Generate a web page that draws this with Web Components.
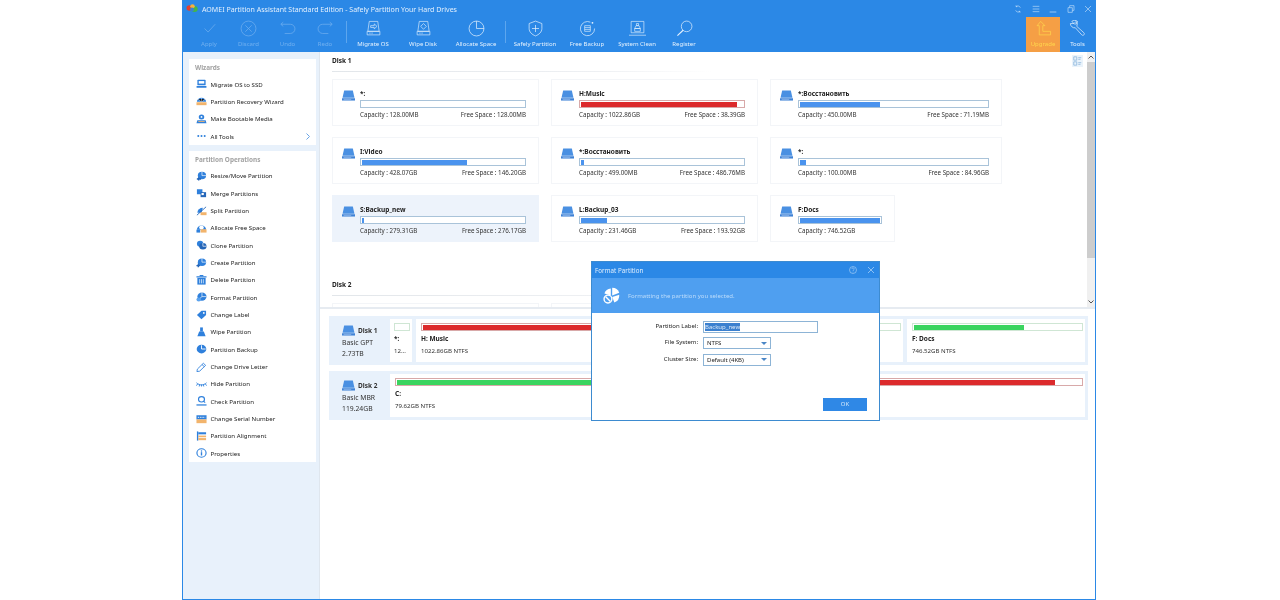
<!DOCTYPE html>
<html lang="en"><head><meta charset="utf-8"><title>AOMEI Partition Assistant</title>
<style>
html,body{margin:0;padding:0;background:#fff;height:600px;overflow:hidden}
body{font-family:"Noto Sans","DejaVu Sans",sans-serif;font-size:6.3px;color:#333;padding-left:182px}
</style></head><body>
<app-window></app-window>
<script>
const B='#2f80dc',O='#f2b46c';
const ICONS={
check:'<path d="M5 12l5 5 10-11" fill="none" stroke="currentColor" stroke-width="1"/>',
discard:'<circle cx="12" cy="12" r="10.5" fill="none" stroke="currentColor"/><path d="M7.5 7.5l9 9M16.5 7.5l-9 9" fill="none" stroke="currentColor"/>',
undo:'<path d="M3 6h13a6 6 0 0 1 0 13H8M6 3L2.500 6 6 9" fill="none" stroke="currentColor"/>',
redo:'<path d="M21 6H8a6 6 0 0 0 0 13h8M18 3l3.500 3L18 9" fill="none" stroke="currentColor"/>',
migrate:'<path d="M6 2h12l2 14H4zM3 16h18v5H3zM6 18.500h2M9 18.500h2M8 8h5V5.500L17 9l-4 3.500V10.500H8z" fill="none" stroke="currentColor" stroke-width=".9"/>',
wipe:'<path d="M6 2h12l2 14H4zM3 16h18v5H3zM6 18.500h2M9 18.500h2" fill="none" stroke="currentColor" stroke-width=".9"/><path d="M12 5l4 4-4 4-4-4z" fill="none" stroke="currentColor" stroke-width=".9"/>',
pie:'<circle cx="12" cy="12" r="10.500" fill="none" stroke="currentColor"/><path d="M12 1.500V12H22.500" fill="none" stroke="currentColor"/>',
shield:'<path d="M12 1.500l9 3.500v7c0 5-4 8.500-9 10.500-5-2-9-5.500-9-10.500V5zM12 7v10M7 12h10" fill="none" stroke="currentColor"/>',
backup:'<path d="M16 3a10 10 0 1 0 6 9" fill="none" stroke="currentColor"/><circle cx="19" cy="4" r="1.300" fill="currentColor"/><path d="M8 8h8v8H8zM8 10.700h8M8 13.300h8" fill="none" stroke="currentColor" stroke-width=".9"/>',
clean:'<path d="M3 2h18v16H3zM0 21.500h24M10.500 5h3v3h-3zM8 12l2-4h4l2 4zM8 12h8v4H8z" fill="none" stroke="currentColor" stroke-width=".9"/>',
search:'<circle cx="15" cy="9" r="7.500" fill="none" stroke="currentColor"/><path d="M10 14.500L2 22" fill="none" stroke="currentColor" stroke-width="1.600"/>',
upgrade:'<path d="M8 2L3 8h3v13h16v-5H11V8h3z" fill="none" stroke="currentColor"/>',
tools:'<path d="M4 2l4 4 3-1 1-3c-2-2-6-2-8 0zM2 5a6 6 0 0 0 7 6l9 10c2 2 5-1 3-3L11 9a6 6 0 0 0-1-7L7 5z" fill="none" stroke="currentColor"/>',
refresh:'<path d="M19 8A8 8 0 0 0 6 5M5 16a8 8 0 0 0 13 3M6 1v4h4M18 23v-4h-4" fill="none" stroke="currentColor" stroke-width="1.800"/>',
menu:'<path d="M2 4h20M2 12h20M2 20h20" stroke="currentColor" stroke-width="1.800"/>',
min:'<path d="M2 21h20" stroke="currentColor" stroke-width="2"/>',
restore:'<path d="M3 8h13v14H3zM8 8V2h13v14h-5" fill="none" stroke="currentColor" stroke-width="1.800"/>',
close:'<path d="M3 3l18 18M21 3L3 21" stroke="currentColor" stroke-width="1.800"/>',
disk:'<path d="M4 1h16l3 16H1z" fill="#4a90e2"/><rect x="0" y="18" width="24" height="5" fill="#3f82d6"/><path d="M3 20.500h14" stroke="#bcd8f6"/>',
logo:'<circle cx="7" cy="11" r="6" fill="#e3402f"/><circle cx="17" cy="13" r="6.500" fill="#45b549"/><circle cx="13" cy="7" r="4.500" fill="#f3b33d"/><circle cx="12" cy="14" r="4" fill="#3b82d0"/>',
ssd:`<rect x="3" y="2" width="18" height="13" rx="1.500" fill="${B}"/><rect x="6" y="5" width="12" height="6" fill="#fff"/><rect x="1" y="17" width="22" height="4" rx="1" fill="${B}"/>`,
recover:`<path d="M2 14a10 10 0 0 1 20 0z" fill="${B}"/><path d="M12 4v10M5 8l7 6 7-6" stroke="#fff"/><rect x="1" y="15" width="22" height="7" fill="${O}"/>`,
boot:`<circle cx="12" cy="7" r="6" fill="${B}"/><circle cx="12" cy="7" r="2" fill="#fff"/><path d="M3 15h18l2 7H1z" fill="${B}"/><rect x="5" y="17" width="14" height="2" fill="${O}"/>`,
dots:`<circle cx="5" cy="12" r="2.200" fill="${B}"/><circle cx="12" cy="12" r="2.200" fill="${B}"/><circle cx="19" cy="12" r="2.200" fill="${B}"/>`,
resize:`<circle cx="13" cy="11" r="9" fill="${B}"/><path d="M13 11V2M13 11h9" stroke="#fff" stroke-width="1.500"/><path d="M1 19l6-5v3h4v4H7v3z" fill="#2566b8"/>`,
merge:`<rect x="2" y="3" width="12" height="12" fill="${B}"/><rect x="10" y="10" width="12" height="12" fill="#2566b8"/><rect x="12" y="12" width="5" height="5" fill="#fff"/>`,
split:`<path d="M3 16a12 12 0 0 1 12-12l-3 12z" fill="${B}"/><path d="M2 22L22 2" stroke="#2566b8" stroke-width="2"/><rect x="10" y="15" width="13" height="7" fill="${O}"/>`,
alloc:`<path d="M2 16a10 10 0 0 1 20 0z" fill="${B}"/><circle cx="12" cy="11" r="5" fill="#fff"/><rect x="10" y="15" width="13" height="8" fill="${O}"/><rect x="1" y="16" width="8" height="7" fill="${B}"/>`,
clone:`<circle cx="9" cy="9" r="7" fill="${B}"/><circle cx="15" cy="15" r="8" fill="#2566b8"/><path d="M15 15V7M15 15h8" stroke="#fff" stroke-width="1.500"/>`,
create:`<circle cx="13" cy="10" r="9" fill="${B}"/><path d="M13 10V1M13 10h9" stroke="#fff" stroke-width="1.500"/><path d="M5 14v8M1 18h8" stroke="#2566b8" stroke-width="3"/>`,
del:`<rect x="3" y="7" width="18" height="16" fill="${B}"/><rect x="1" y="3" width="22" height="3" fill="${B}"/><rect x="8" y="0" width="8" height="3" fill="${B}"/><path d="M8 10v10M12 10v10M16 10v10" stroke="#fff" stroke-width="1.500"/>`,
format:`<circle cx="13" cy="11" r="10" fill="${B}"/><path d="M13 11V1M13 11h10M13 11l-7 7" stroke="#fff" stroke-width="1.500"/><circle cx="6" cy="18" r="5" fill="#5ba3ee"/>`,
label:`<path d="M2 12L12 2h10v10L12 22z" fill="${B}"/><circle cx="17" cy="7" r="2" fill="#fff"/>`,
wipe2:`<rect x="9" y="1" width="6" height="10" fill="${B}"/><path d="M7 11h10l4 11H3z" fill="${B}"/>`,
pbackup:`<circle cx="12" cy="12" r="10.500" fill="${B}"/><path d="M12 12V3M12 12h9" stroke="#fff" stroke-width="2"/>`,
pen:`<path d="M3 17L16 3l5 5L8 22l-6 1z" fill="none" stroke="${B}" stroke-width="2"/><path d="M13 6l5 5" stroke="${B}" stroke-width="2"/>`,
hide:`<path d="M1 9c6 7 16 7 22 0M4 11l-3 5M20 11l3 5M12 13v5M8 13l-1 5M16 13l1 5" fill="none" stroke="${B}" stroke-width="2"/>`,
checkp:`<circle cx="12" cy="8" r="6.500" fill="none" stroke="${B}" stroke-width="2.500"/><path d="M16 12l4 4" stroke="${B}" stroke-width="2.500"/><rect x="1" y="20" width="22" height="3" fill="${B}"/>`,
serial:`<rect x="1" y="3" width="22" height="10" fill="${B}"/><rect x="1" y="13" width="22" height="9" fill="${O}"/><path d="M4 8h16" stroke="#fff" stroke-width="2" stroke-dasharray="3 2"/>`,
align:`<rect x="2" y="1" width="3" height="22" fill="${B}"/><rect x="5" y="3" width="17" height="5" fill="${B}"/><rect x="5" y="11" width="17" height="4" fill="${O}"/><rect x="5" y="17" width="17" height="5" fill="${O}"/>`,
info:`<circle cx="12" cy="12" r="10" fill="none" stroke="${B}" stroke-width="2.500"/><circle cx="12" cy="7" r="1.700" fill="${B}"/><rect x="10.500" y="10" width="3" height="8" fill="${B}"/>`,
layout:'<path d="M2 2h8v8H2zM2 14h8v8H2zM14 4h8M14 8h6M14 16h8M14 20h6" fill="none" stroke="#8cb6dd" stroke-width="2"/>',
help:'<circle cx="12" cy="12" r="10.500" fill="none" stroke="currentColor" stroke-width="1.500"/><path d="M8.500 9a3.500 3.500 0 1 1 5 3.200c-1 .6-1.500 1.300-1.500 2.800M12 17v2" fill="none" stroke="currentColor" stroke-width="1.500"/>',
fmt:'<path d="M13 1a11 11 0 0 1 10 7l-10 4z" fill="#fff"/><path d="M11 2v10L2 9a10 10 0 0 1 9-7z" fill="#fff"/><path d="M23 11a11 11 0 0 1-7 11l-3-8z" fill="#fff"/><circle cx="7" cy="17" r="5.500" fill="none" stroke="#fff" stroke-width="2"/><path d="M3.500 13.500l7 7" stroke="#fff" stroke-width="2"/>'
};
function def(name,css,render){
  customElements.define(name,class extends HTMLElement{
    connectedCallback(){
      if(this.shadowRoot)return;
      const s=this.attachShadow({mode:'open'});
      const a=k=>this.getAttribute(k)||'';
      s.innerHTML='<style>'+css+'</style>'+render(a);
    }
  });
}
def('ui-icon',':host{display:inline-block;line-height:0;flex:none}svg{display:block;width:100%;height:100%}',
  a=>`<svg viewBox="0 0 24 24" preserveAspectRatio="none">${ICONS[a('name')]||''}</svg>`);

def('title-bar',`:host{display:flex;align-items:center;height:17px;background:#2b88e6;color:#e3f0fe;padding:0 3px 0 3px;font-size:7.050px}
 .t{flex:1;margin-left:4px}.c{display:flex;align-items:center;color:#cfe5fb}
 ui-icon{width:8px;height:8px;margin-left:9.400px}`,
 a=>`<ui-icon name="logo" style="width:12px;height:11px;margin:0"></ui-icon><span class="t"><slot></slot></span>
 <span class="c"><ui-icon name="refresh"></ui-icon><ui-icon name="menu"></ui-icon><ui-icon name="min"></ui-icon><ui-icon name="restore"></ui-icon><ui-icon name="close"></ui-icon></span>`);

def('tool-item',`:host{display:flex;flex-direction:column;align-items:center;flex:none;height:35px;box-sizing:border-box;padding-top:3px;color:#e6f2fe;font-size:6px;white-space:nowrap}
 :host([off]){color:#71b0f0}:host([accent]){background:#f59f45;color:#ffd64d}
 ui-icon{width:17px;height:17px;margin-bottom:3px}`,
 a=>`<ui-icon name="${a('icon')}"></ui-icon><span><slot></slot></span>`);

def('tool-sep',':host{display:block;width:1px;height:22px;margin:4px 1px 0 2px;background:#5da6ee;flex:none}',a=>'');

def('tool-bar',`:host{display:flex;height:35px;background:#2b88e6;padding-left:7px;box-sizing:border-box}`,a=>`<slot></slot>`);

def('side-item',`:host{display:flex;align-items:center;height:17.330px;padding-left:6.500px;font-size:6.100px;color:#222;white-space:nowrap}
 ui-icon{width:11px;height:10px;margin-right:4px}
 svg{margin-left:auto;margin-right:6px;width:4px;height:7px}`,
 a=>`<ui-icon name="${a('icon')}"></ui-icon><span><slot></slot></span>${a('more')?'<svg viewBox="0 0 4 7"><path d="M.5.500L3.500 3.500.5 6.500" fill="none" stroke="#6aa5e6"/></svg>':''}`);

def('side-panel',`:host{display:block;background:#fff;margin:0 3px 6px 6px;padding-top:3px}
 h3{margin:0 0 2.500px 6px;height:11px;line-height:11px;font-size:6.400px;font-weight:700;color:#a2a2a2}`,
 a=>`<h3>${a('heading')}</h3><slot></slot>`);

def('usage-bar',`:host{height:8px;box-sizing:border-box;border:1px solid var(--edge,#a9c3d9);background:#fff;padding:.5px 1px;display:flex}
 i{display:block;height:100%}`,
 a=>`<i style="width:${a('pct')}%;background:${a('fill')||'#4a93ee'}"></i><i style="width:${a('pct2')||0}%;background:${a('fill2')||'transparent'}"></i>`);

def('partition-card',`:host{display:grid;grid-template-columns:13px 1fr;column-gap:5px;box-sizing:border-box;height:47px;border:1px solid #f3f5f8;padding:10px 12px 0 9px;background:#fff;font-size:6.200px;color:#333}
 :host([selected]){background:#edf3fb;border-color:#edf3fb}
 ui-icon{width:13px;height:11px}
 .n{font-weight:700;color:#222;height:10px;line-height:7px;font-size:6.500px;white-space:nowrap}
 .x{display:flex;justify-content:space-between;margin-top:3px;white-space:nowrap;line-height:8px}`,
 a=>`<ui-icon name="disk"></ui-icon><div><div class="n">${a('name')}</div>
 <usage-bar pct="${a('pct')}" fill="${a('fill')}" style="${a('fill')?'--edge:#d8a9a9':''}"></usage-bar>
 <div class="x"><span>Capacity : ${a('cap')}</span>${a('free')?`<span>Free Space : ${a('free')}</span>`:''}</div></div>`);

def('disk-section',`:host{display:block}
 h4{margin:0;font-size:6.500px;font-weight:700;color:#222;height:11px;line-height:11px;padding-top:3px}
 hr{border:0;height:1px;margin:5px 0 7px;width:380px;background:linear-gradient(90deg,#e2e6ea,#eef0f3 70%,transparent)}
 .g{display:grid;grid-template-columns:207px 207px 232px;grid-auto-rows:47px;gap:11px 12px;justify-items:stretch}`,
 a=>`<h4>${a('heading')}</h4><hr><div class="g"><slot></slot></div>`);

def('disk-cell',`:host{display:block;box-sizing:border-box;background:#fff;padding:4px 2px 0 5px;font-size:6.100px;color:#333;overflow:hidden;white-space:nowrap;flex:none}
 .n{font-weight:700;color:#222;margin-top:2.500px;line-height:9px;font-size:6.500px;min-height:9px}.s{margin-top:3.500px;line-height:9px}`,
 a=>`<slot></slot><div class="n">${a('name')}</div><div class="s">${a('size')}</div>`);

def('disk-row',`:host{display:flex;background:#e8f1fb;height:49px;padding:3px 3px 3px 0;box-sizing:border-box;margin:0;gap:4px}
 .l{width:60px;flex:none;box-sizing:border-box;padding:5px 0 0 13px;font-size:6.800px;color:#333;line-height:11px;margin-right:-3px}
 .h{display:flex;align-items:center;height:12px;font-weight:700;font-size:6.500px;margin-bottom:1px}
 ui-icon{width:13px;height:11px;margin-right:3px}
 .c{flex:1;display:flex;gap:4px;min-width:0}`,
 a=>`<div class="l"><div class="h"><ui-icon name="disk"></ui-icon>${a('heading')}</div><div>${a('kind')}</div><div>${a('size')}</div></div><div class="c"><slot></slot></div>`);

def('format-dialog',`:host{position:absolute;left:408px;top:261px;width:289px;height:160px;box-sizing:border-box;background:#fff;border:1px solid #3d8bd0;font-size:6px;color:#222;display:flex;flex-direction:column}
 .t{height:16px;flex:none;background:#2b88e6;color:#e3f0fe;display:flex;align-items:center;padding:0 4px 0 3px;font-size:6.200px;letter-spacing:.05px}
 .t span{flex:1}.t ui-icon{width:8px;height:8px;margin-left:10px;color:#cfe5fb}
 .b{height:35px;flex:none;background:#4f9ff0;color:#bcdcfb;display:flex;align-items:center;padding-left:11px;gap:8px}
 .b ui-icon{width:17px;height:17px}
 .f{flex:1;display:grid;grid-template-columns:106px auto;grid-auto-rows:12px;row-gap:4.700px;column-gap:5px;padding-top:7.500px;align-content:start}
 label{text-align:right;line-height:11px}
 .i{width:115px;height:12px;box-sizing:border-box;border:1px solid #8db4d6;padding:0 1px;line-height:10px}
 .i b{font-weight:400;background:#3b80cf;color:#dbe9f8;display:inline-block;line-height:8px}
 .s{width:68px;height:12px;box-sizing:border-box;border:1px solid #8db4d6;padding:0 3px;line-height:10px;display:flex;align-items:center;justify-content:space-between}
 .s i{width:0;height:0;border:3px solid transparent;border-top:3.500px solid #4a86c6;border-bottom:0}
 .k{display:flex;justify-content:flex-end;padding:0 12px 8.700px}
 .o{width:44px;height:13.500px;background:#2f88e6;color:#cfe5fb;text-align:center;line-height:13.500px}`,
 a=>`<div class="t"><span>Format Partition</span><ui-icon name="help"></ui-icon><ui-icon name="close"></ui-icon></div>
 <div class="b"><ui-icon name="fmt"></ui-icon><span>Formatting the partition you selected.</span></div>
 <div class="f"><label>Partition Label:</label><div class="i"><b>Backup_new</b></div>
 <label>File System:</label><div class="s"><span>NTFS</span><i></i></div>
 <label>Cluster Size:</label><div class="s"><span>Default (4KB)</span><i></i></div></div>
 <div class="k"><div class="o">OK</div></div>`);

def('scroll-rail',`:host{display:flex;flex-direction:column;width:8px;background:#f0f0f0;flex:none;align-items:center}
 .a{height:10px;flex:none;width:8px;display:flex;align-items:center;justify-content:center}
 .a svg{width:6px;height:4px}.th{width:8px;height:196px;background:#cdcdcd;flex:none}.sp{flex:1}`,
 a=>`<div class="a"><svg viewBox="0 0 6 4"><path d="M.5 3.500L3 1l2.500 2.500" fill="none" stroke="#555"/></svg></div><div class="th"></div><div class="sp"></div>
 <div class="a"><svg viewBox="0 0 6 4"><path d="M.5.500L3 3l2.500-2.500" fill="none" stroke="#555"/></svg></div>`);

def('app-window',`:host{display:flex;flex-direction:column;width:914px;height:600px;box-sizing:border-box;border:1px solid #2b88e6;border-top:0;background:#fff;filter:blur(.3px)}
 .body{flex:1;display:flex;min-height:0}
 .side{width:137px;flex:none;background:#e8f1fb;padding-top:7px;box-sizing:border-box;border-right:1px solid #dfe6ee}
 .main{flex:1;display:flex;flex-direction:column;min-width:0}
 .up{height:255px;flex:none;display:flex;border-bottom:2px solid #e6ebf1;box-sizing:content-box}
 .sc{flex:1;overflow:hidden;padding:0 0 0 12px;position:relative}
 .lay{position:absolute;right:4px;top:3px;width:11px;height:12px;background:#eaf3fb;padding:1px;box-sizing:border-box}
 .lay ui-icon{width:100%;height:100%;display:block}
 .gap{height:33.500px}
 .ghost{border:1px solid #f3f5f8;height:47px;box-sizing:border-box}
 .low{flex:1;padding:7px 7px 0 9px;display:flex;flex-direction:column;gap:6px}`,
 a=>`<title-bar>AOMEI Partition Assistant Standard Edition - Safely Partition Your Hard Drives</title-bar>
 <tool-bar>
  <tool-item off icon="check" style="width:38px">Apply</tool-item>
  <tool-item off icon="discard" style="width:41px">Discard</tool-item>
  <tool-item off icon="undo" style="width:37px">Undo</tool-item>
  <tool-item off icon="redo" style="width:38px">Redo</tool-item>
  <tool-sep></tool-sep>
  <tool-item icon="migrate" style="width:50px">Migrate OS</tool-item>
  <tool-item icon="wipe" style="width:50px">Wipe Disk</tool-item>
  <tool-item icon="pie" style="width:56px">Allocate Space</tool-item>
  <tool-sep style="margin:4px 0 0 1px"></tool-sep>
  <tool-item icon="shield" style="width:58px">Safely Partition</tool-item>
  <tool-item icon="backup" style="width:46px">Free Backup</tool-item>
  <tool-item icon="clean" style="width:54px">System Clean</tool-item>
  <tool-item icon="search" style="width:40px">Register</tool-item>
  <span style="flex:1"></span>
  <tool-item accent icon="upgrade" style="width:34px">Upgrade</tool-item>
  <tool-item icon="tools" style="width:35px">Tools</tool-item>
 </tool-bar>
 <div class="body">
  <div class="side">
   <side-panel heading="Wizards">
    <side-item icon="ssd">Migrate OS to SSD</side-item>
    <side-item icon="recover">Partition Recovery Wizard</side-item>
    <side-item icon="boot">Make Bootable Media</side-item>
    <side-item icon="dots" more="1">All Tools</side-item>
   </side-panel>
   <side-panel heading="Partition Operations">
    <side-item icon="resize">Resize/Move Partition</side-item>
    <side-item icon="merge">Merge Partitions</side-item>
    <side-item icon="split">Split Partition</side-item>
    <side-item icon="alloc">Allocate Free Space</side-item>
    <side-item icon="clone">Clone Partition</side-item>
    <side-item icon="create">Create Partition</side-item>
    <side-item icon="del">Delete Partition</side-item>
    <side-item icon="format">Format Partition</side-item>
    <side-item icon="label">Change Label</side-item>
    <side-item icon="wipe2">Wipe Partition</side-item>
    <side-item icon="pbackup">Partition Backup</side-item>
    <side-item icon="pen">Change Drive Letter</side-item>
    <side-item icon="hide">Hide Partition</side-item>
    <side-item icon="checkp">Check Partition</side-item>
    <side-item icon="serial">Change Serial Number</side-item>
    <side-item icon="align">Partition Alignment</side-item>
    <side-item icon="info">Properties</side-item>
   </side-panel>
  </div>
  <div class="main">
   <div class="up">
    <div class="sc">
     <disk-section heading="Disk 1">
      <partition-card name="*:" pct="0" cap="128.00MB" free="128.00MB"></partition-card>
      <partition-card name="H:Music" pct="96" fill="#dc2a2c" cap="1022.86GB" free="38.39GB"></partition-card>
      <partition-card name="*:Восстановить" pct="43" cap="450.00MB" free="71.19MB"></partition-card>
      <partition-card name="I:Video" pct="65" cap="428.07GB" free="146.20GB"></partition-card>
      <partition-card name="*:Восстановить" pct="2" cap="499.00MB" free="486.76MB"></partition-card>
      <partition-card name="*:" pct="3" cap="100.00MB" free="84.96GB"></partition-card>
      <partition-card selected name="S:Backup_new" pct="1" cap="279.31GB" free="276.17GB"></partition-card>
      <partition-card name="L:Backup_03" pct="16" cap="231.46GB" free="193.92GB"></partition-card>
      <partition-card name="F:Docs" pct="100" cap="746.52GB" style="width:125px"></partition-card>
     </disk-section>
     <div class="gap"></div>
     <disk-section heading="Disk 2"><div class="ghost"></div><div class="ghost"></div></disk-section>
     <div class="lay"><ui-icon name="layout"></ui-icon></div>
    </div>
    <scroll-rail></scroll-rail>
   </div>
   <div class="low">
    <disk-row heading="Disk 1" kind="Basic GPT" size="2.73TB">
     <disk-cell name="*:" size="12..." style="width:22px;padding-left:4px"><usage-bar pct="0" style="--edge:#cfe6d4"></usage-bar></disk-cell>
     <disk-cell name="H: Music" size="1022.86GB NTFS" style="width:240px"><usage-bar pct="96" fill="#dc2a2c" style="--edge:#d8a9a9"></usage-bar></disk-cell>
     <disk-cell style="flex:1"><usage-bar pct="2" fill="#3ad45f" style="--edge:#cfe6d4"></usage-bar></disk-cell>
     <disk-cell name="F: Docs" size="746.52GB NTFS" style="width:178px"><usage-bar pct="66" fill="#3ad45f" style="--edge:#cfe6d4"></usage-bar></disk-cell>
    </disk-row>
    <disk-row heading="Disk 2" kind="Basic MBR" size="119.24GB">
     <disk-cell name="C:" size="79.62GB NTFS" style="flex:1"><usage-bar pct="70.600" fill="#3ad45f" pct2="25.600" fill2="#dc2a2c" style="--edge:#d8a9a9"></usage-bar></disk-cell>
    </disk-row>
   </div>
  </div>
 </div>
 <format-dialog></format-dialog>`);
</script>
</body></html>
